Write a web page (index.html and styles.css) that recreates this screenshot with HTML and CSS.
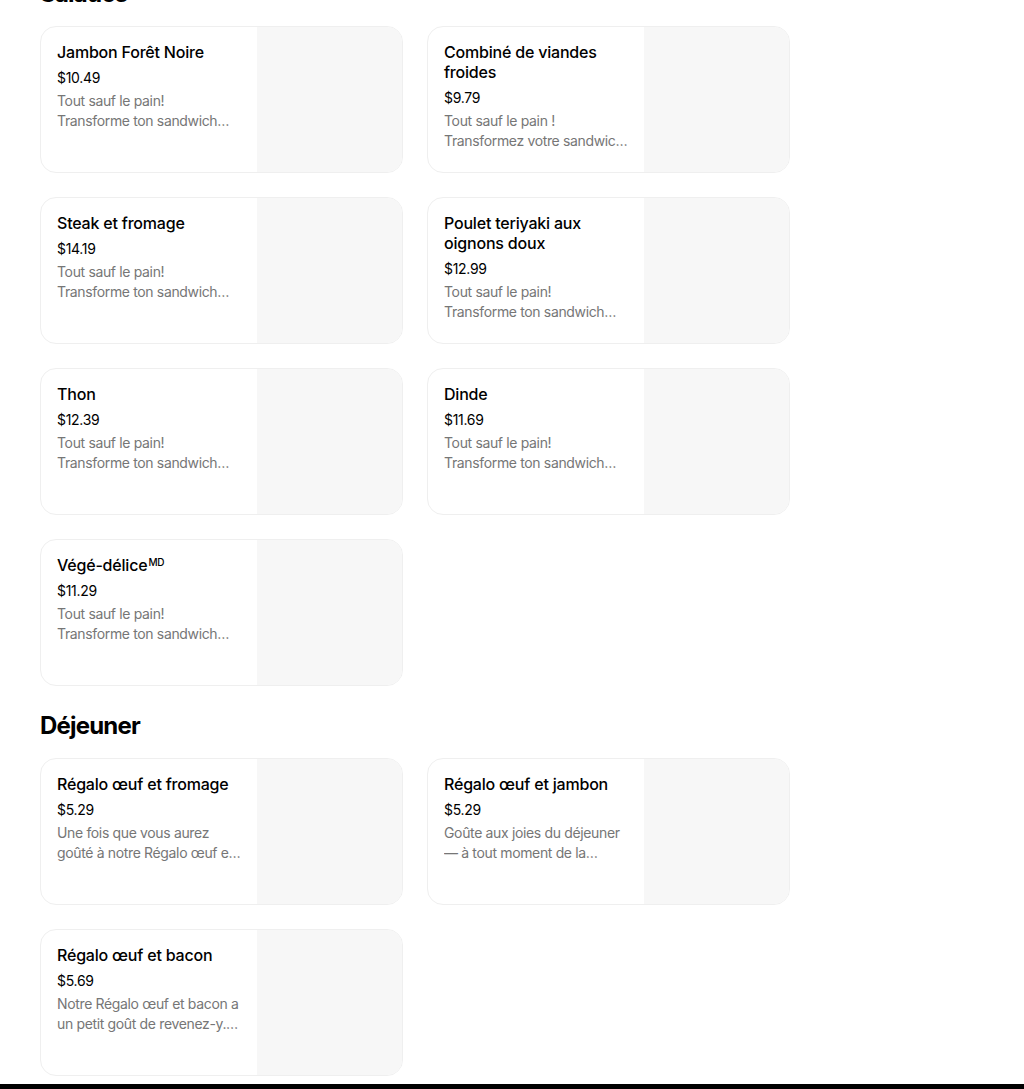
FILE: index.html
```html
<!DOCTYPE html>
<html lang="fr">
<head>
<meta charset="utf-8">
<title>Menu</title>
<link rel="stylesheet" href="styles.css">
</head>
<body>
<main class="menu">
  <section class="section">
    <h2 class="section-title">Salades</h2>
    <div class="grid">
      <div class="card">
        <div class="info">
          <div class="name">Jambon Forêt Noire</div>
          <div class="price">$10.49</div>
          <div class="desc">Tout sauf le pain!<br>Transforme ton sandwich préféré en salade fraîche et croquante.</div>
        </div>
        <div class="thumb"></div>
      </div>
      <div class="card">
        <div class="info">
          <div class="name">Combiné de viandes froides</div>
          <div class="price">$9.79</div>
          <div class="desc">Tout sauf le pain !<br>Transformez votre sandwich préféré en salade.</div>
        </div>
        <div class="thumb"></div>
      </div>
      <div class="card">
        <div class="info">
          <div class="name">Steak et fromage</div>
          <div class="price">$14.19</div>
          <div class="desc">Tout sauf le pain!<br>Transforme ton sandwich préféré en salade fraîche et croquante.</div>
        </div>
        <div class="thumb"></div>
      </div>
      <div class="card">
        <div class="info">
          <div class="name">Poulet teriyaki aux oignons doux</div>
          <div class="price">$12.99</div>
          <div class="desc">Tout sauf le pain!<br>Transforme ton sandwich préféré en salade fraîche et croquante.</div>
        </div>
        <div class="thumb"></div>
      </div>
      <div class="card">
        <div class="info">
          <div class="name">Thon</div>
          <div class="price">$12.39</div>
          <div class="desc">Tout sauf le pain!<br>Transforme ton sandwich préféré en salade fraîche et croquante.</div>
        </div>
        <div class="thumb"></div>
      </div>
      <div class="card">
        <div class="info">
          <div class="name">Dinde</div>
          <div class="price">$11.69</div>
          <div class="desc">Tout sauf le pain!<br>Transforme ton sandwich préféré en salade fraîche et croquante.</div>
        </div>
        <div class="thumb"></div>
      </div>
      <div class="card">
        <div class="info">
          <div class="name">Végé-délice<span class="mark">MD</span></div>
          <div class="price">$11.29</div>
          <div class="desc">Tout sauf le pain!<br>Transforme ton sandwich préféré en salade fraîche et croquante.</div>
        </div>
        <div class="thumb"></div>
      </div>
    </div>
  </section>
  <section class="section">
    <h2 class="section-title">Déjeuner</h2>
    <div class="grid">
      <div class="card">
        <div class="info">
          <div class="name">Régalo œuf et fromage</div>
          <div class="price">$5.29</div>
          <div class="desc">Une fois que vous aurez goûté à notre Régalo œuf et fromage, vous en redemanderez.</div>
        </div>
        <div class="thumb"></div>
      </div>
      <div class="card">
        <div class="info">
          <div class="name">Régalo œuf et jambon</div>
          <div class="price">$5.29</div>
          <div class="desc">Goûte aux joies du déjeuner — à tout moment de la journée.</div>
        </div>
        <div class="thumb"></div>
      </div>
      <div class="card">
        <div class="info">
          <div class="name">Régalo œuf et bacon</div>
          <div class="price">$5.69</div>
          <div class="desc">Notre Régalo œuf et bacon a un petit goût de revenez-y... à tout moment.</div>
        </div>
        <div class="thumb"></div>
      </div>
    </div>
  </section>
</main>
<footer class="footer"></footer>
</body>
</html>
```
FILE: styles.css
```css
* {
  box-sizing: border-box;
}

html, body {
  margin: 0;
  padding: 0;
  background: #ffffff;
}

body {
  font-family: Inter, "Liberation Sans", Arial, sans-serif;
  color: #000000;
}

.menu {
  margin-top: -46px;
  padding: 0 40px;
}

.section {
  padding-top: 24px;
}

.section-title {
  margin: 0 0 16px 0;
  font-size: 24px;
  line-height: 32px;
  font-weight: 700;
  letter-spacing: -0.8px;
}

.grid {
  display: grid;
  grid-template-columns: 363px 363px;
  gap: 24px;
}

.card {
  display: flex;
  height: 147px;
  border: 1px solid #efefef;
  border-radius: 16px;
  overflow: hidden;
  background: #ffffff;
}

.info {
  width: 216px;
  flex: none;
  padding: 15px 16px 16px 16px;
}

.thumb {
  flex: 1;
  background: #f7f7f7;
}

.name {
  font-size: 16px;
  line-height: 20px;
  font-weight: 500;
  letter-spacing: -0.2px;
}

.mark {
  font-size: 10px;
  line-height: 0;
  vertical-align: 5px;
  font-weight: 500;
  margin-left: 1px;
}

.price {
  margin-top: 6px;
  font-size: 14px;
  line-height: 20px;
  letter-spacing: -0.3px;
}

.desc {
  margin-top: 3px;
  font-size: 14px;
  line-height: 20px;
  color: #767676;
  letter-spacing: -0.35px;
  display: -webkit-box;
  -webkit-line-clamp: 2;
  -webkit-box-orient: vertical;
  overflow: hidden;
}

.footer {
  margin-top: 8px;
  height: 200px;
  background: #000000;
}
```
